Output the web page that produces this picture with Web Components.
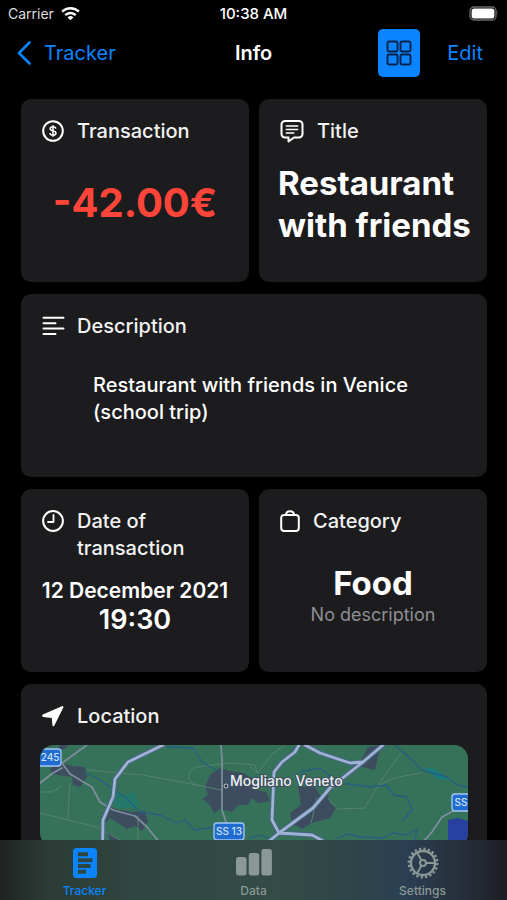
<!DOCTYPE html>
<html lang="en">
<head>
<meta charset="utf-8">
<meta name="viewport" content="width=device-width, initial-scale=1">
<title>Info</title>
<style>
  html, body {
    margin: 0;
    height: 100%;
    background: #000;
    color: #fff;
    font-family: Inter, "Noto Sans", sans-serif;
  }
</style>
</head>
<body>
<info-screen></info-screen>

<script>
  'use strict';
  {
    const ICONS = {
      wifi: '<svg viewBox="0 0 20 15"><g fill="none" stroke="currentColor" stroke-width="2.500"><path d="M1.200 5.600a12.500 12.500 0 0 1 17.600 0"/><path d="M4.500 9.200a7.800 7.800 0 0 1 11 0"/></g><path fill="currentColor" d="M10 14.500 6.900 11.600a4.600 4.600 0 0 1 6.200 0z"/></svg>',
      battery: '<svg viewBox="0 0 30 15"><rect x="1" y="1" width="26" height="13" rx="4" fill="none" stroke="#6b6b6b" stroke-width="1.300"/><rect x="2.600" y="2.600" width="22.800" height="9.800" rx="2.500" fill="#fff"/><path d="M28.300 5.300q1.500 2.200 0 4.400z" fill="#6b6b6b"/></svg>',
      back: '<svg viewBox="0 0 16 26"><path d="M13.500 2.500 3 13l10.500 10.500" fill="none" stroke="currentColor" stroke-width="2.700" stroke-linecap="round" stroke-linejoin="round"/></svg>',
      grid: '<svg viewBox="0 0 26 26"><g fill="none" stroke="#06224a" stroke-width="1.900"><rect x="1.500" y="1.500" width="10" height="10" rx="1.500"/><rect x="14.500" y="1.500" width="10" height="10" rx="1.500"/><rect x="1.500" y="14.500" width="10" height="10" rx="1.500"/><rect x="14.500" y="14.500" width="10" height="10" rx="1.500"/></g></svg>',
      money: '<svg viewBox="0 0 24 24"><circle cx="12" cy="12" r="9.800" fill="none" stroke="currentColor" stroke-width="2"/><path d="M14.800 9.700C14.600 8.300 13.500 7.800 12 7.800c-1.700 0-2.800.8-2.800 2 0 3 5.800 1.200 5.800 4.300 0 1.300-1.200 2.100-3 2.100-1.800 0-2.900-.8-3-2.200M12 6.200v11.600" fill="none" stroke="currentColor" stroke-width="1.500"/></svg>',
      bubble: '<svg viewBox="0 0 24 24"><path d="M5 2h14a3.500 3.500 0 0 1 3.500 3.500v9.500a3.500 3.500 0 0 1-3.500 3.500h-5L8.500 22.500V18.500H5a3.500 3.500 0 0 1-3.500-3.500V5.500a3.500 3.500 0 0 1 3.500-3.500z" fill="none" stroke="currentColor" stroke-width="2" stroke-linejoin="round"/><path d="M6.300 7h11.400M6.300 10.500h11.400M6.300 14h7.500" stroke="currentColor" stroke-width="1.500" stroke-linecap="round"/></svg>',
      lines: '<svg viewBox="0 0 24 24"><path d="M2.500 3.800h20M2.500 9.200h12M2.500 14.600h20M2.500 20h12" stroke="currentColor" stroke-width="2" stroke-linecap="round"/></svg>',
      clock: '<svg viewBox="0 0 24 24"><circle cx="12" cy="12" r="9.900" fill="none" stroke="currentColor" stroke-width="2"/><path d="M12.500 6v7H7" fill="none" stroke="currentColor" stroke-width="1.800" stroke-linecap="round" stroke-linejoin="round"/></svg>',
      bag: '<svg viewBox="0 0 20 24"><rect x="1.200" y="6" width="17.600" height="16" rx="3" fill="none" stroke="currentColor" stroke-width="2"/><path d="M6 6c0-5 8-5 8 0" fill="none" stroke="currentColor" stroke-width="2"/></svg>',
      arrow: '<svg viewBox="0 0 24 24"><path d="M1.800 10.400 20.900 2.200q2-.5 1.400 1.400L13.400 21.600q-1.500 1.700-2-.3l-.6-7.400-8.500-.9q-2.200-1.100-.5-2.600z" fill="currentColor"/></svg>',
      document: '<svg viewBox="0 0 32 32"><rect x="4" y="1" width="24" height="30" rx="3.500" fill="currentColor"/><path d="M9 7.300h10M9 13.300h14.500M9 19h12.500M9 24.800h8" stroke="#2e4640" stroke-width="4"/></svg>',
      bars: '<svg viewBox="0 0 38 32"><g fill="currentColor"><rect x="1" y="10" width="10.500" height="18.500" rx="2.500"/><rect x="13.700" y="6" width="10.500" height="22.500" rx="2.500"/><rect x="26.400" y="2" width="10.500" height="26.500" rx="2.500"/></g></svg>',
      gear: '<svg viewBox="0 0 32 32"><g fill="none" stroke="currentColor"><circle cx="16" cy="16" r="14.200" stroke-width="2.500" stroke-dasharray="2.230 2.230"/><circle cx="16" cy="16" r="12" stroke-width="2.300"/><circle cx="16" cy="16" r="3" stroke-width="2"/><path d="M19 16h9M14.500 13.400 10 5.600M14.500 18.600 10 26.400" stroke-width="2"/></g></svg>'
    };

    const define = (name, html) => {
      customElements.define(name, class extends HTMLElement {
        constructor() {
          super();
          this.attachShadow({mode: 'open'}).innerHTML = html;
        }
      });
    };

    /** `<ui-icon name="clock">` draws one of ICONS, as large as its host. */
    class UiIcon extends HTMLElement {
      constructor() {
        super();
        this.attachShadow({mode: 'open'});
      }

      connectedCallback() {
        this.shadowRoot.innerHTML = `
          <style>
            :host { display: block; flex: none; width: 24px; height: 24px; }
            svg { display: block; width: 100%; height: 100%; }
          </style>
          ${ICONS[this.getAttribute('name')]}
        `;
      }
    }
    customElements.define('ui-icon', UiIcon);

    define('status-bar', `
      <style>
        :host {
          display: grid;
          grid-template-columns: 1fr auto 1fr;
          align-items: center;
          height: 27px;
          padding: 0 8px;
          font-size: 14px;
        }
        .carrier { display: flex; align-items: center; gap: 7px; color: #ddd; }
        .wifi { width: 19px; height: 15px; color: #fff; }
        .time { font-size: 15px; font-weight: 500; }
        .battery { width: 30px; height: 15px; justify-self: end; }
      </style>
      <span class="carrier">Carrier <ui-icon class="wifi" name="wifi"></ui-icon></span>
      <span class="time">10:38 AM</span>
      <ui-icon class="battery" name="battery"></ui-icon>
    `);

    define('nav-bar', `
      <style>
        :host {
          display: grid;
          grid-template-columns: 1fr auto 1fr;
          align-items: center;
          height: 52px;
          padding: 0 16px;
          font-size: 20px;
        }
        a, button { font: inherit; color: #0a84ff; text-decoration: none; }
        button { border: 0; padding: 0; background: none; }
        .back { display: flex; align-items: center; gap: 12px; }
        .back ui-icon { width: 16px; height: 26px; }
        h1 { margin: 0; font-size: 20px; font-weight: 600; }
        .actions { display: flex; align-items: center; justify-content: flex-end; gap: 27px; padding-right: 8px; }
        .toggle {
          display: grid;
          place-items: center;
          width: 42px;
          height: 48px;
          border-radius: 5px;
          background: #0a84ff;
        }
        .toggle ui-icon { width: 26px; height: 26px; }
      </style>
      <a class="back" href="#tracker"><ui-icon name="back"></ui-icon>Tracker</a>
      <h1>Info</h1>
      <div class="actions">
        <button class="toggle" type="button" aria-label="Grid view"><ui-icon name="grid"></ui-icon></button>
        <button type="button">Edit</button>
      </div>
    `);

    /** Rounded tile with an icon, a heading and a slotted body. */
    class InfoCard extends HTMLElement {
      constructor() {
        super();
        this.attachShadow({mode: 'open'});
      }

      connectedCallback() {
        this.shadowRoot.innerHTML = `
          <style>
            :host {
              display: flex;
              flex-direction: column;
              box-sizing: border-box;
              min-height: 183px;
              padding: 19px 19px 0;
              border-radius: 10px;
              background: #1c1c1e;
            }
            header { display: flex; gap: 12px; padding-left: 1px; }
            .icon { margin-top: 1px; }
            .icon[name="bag"] { width: 22px; }
            .icon[name="bubble"] { width: 26px; }
            h2 { margin: 0; font-size: 20px; line-height: 27px; font-weight: 500; color: #f2f2f2; }
          </style>
          <header>
            <ui-icon class="icon" name="${this.getAttribute('icon')}"></ui-icon>
            <h2>${this.getAttribute('heading')}</h2>
          </header>
          <slot></slot>
        `;
      }
    }
    customElements.define('info-card', InfoCard);

    // Only the top of the map shows above the tab bar.
    define('area-map', `
      <style>
        :host { display: block; height: 180px; border-radius: 14px; overflow: hidden; background: #36725a; }
        svg { display: block; width: 100%; height: 100%; }
        .town { fill: #3d4c5e; }
        .faint { stroke: #57826f; stroke-width: 1; }
        .river { stroke: #245f82; stroke-width: 1.300; }
        .minor { stroke: #7c8d9b; stroke-width: 1.800; }
        .casing { stroke: #4a6680; stroke-width: 5; }
        .major { stroke: #9fb3d4; stroke-width: 2.800; }
        .sign rect { fill: #1f6bd0; stroke: #a5c8f5; stroke-width: 1.300; }
        .sign text { fill: #cfe2fb; font-size: 10px; font-weight: 500; text-anchor: middle; }
        .place { fill: #eef2f4; stroke: #3d4c5e; stroke-width: 2; paint-order: stroke; font-size: 14px; font-weight: 500; }
      </style>
      <svg viewBox="0 0 428 180" preserveAspectRatio="xMidYMin slice" role="img" aria-label="Map of Mogliano Veneto">
        <g class="town">
          <path d="M10 23 22 18 32 21 45 22 47 32 40 42 33 40 32 32 12 29z"/>
          <path d="M20 0h8l-3 4h-7z"/>
          <path d="M70 62 80 65 92 67 105 66 108 77 102 86 95 81 87 84 70 73 65 78 67 66z"/>
          <path d="M165 42 170 30 180 23 190 26 203 28 215 35 214 44 226 47 230 56 218 58 212 53 208 60 198 60 192 67 180 64 174 68 170 60 162 54 168 50z"/>
          <path d="M258 42 275 42 280 50 288 50 290 58 296 63 290 73 272 78 262 84 252 78 250 68 261 60z"/>
          <path d="M328 2 342 0 338 12 335 25 318 21z"/>
          <path d="M66 86 80 95H70z"/>
        </g>
        <path d="M70 45 84 50 95 47 99 63 77 63 73 56z" fill="#25796a"/>
        <path d="M383 22 394 24 410 35 398 34z" fill="#187b7c"/>
        <path d="M408 75 418 73 428 76V130H408z" fill="#2840a0"/>
        <g fill="none" stroke-linejoin="round" stroke-linecap="round">
          <path class="faint" d="M47 25 103 30 157 40 181 45M0 68 57 82 85 98M30 38 28 72M157 40C144 36 148 24 157 22L190 18 215 20 217 28M0 47H12L22 41M210 22 218 28 232 9 245 0M361 8 348 26 335 45 325 63 298 64 288 54M335 44C350 31 366 31 382 28M277 53 271 78M98 71V95"/>
          <path class="river" d="M45 28 57 33 70 42 85 52 100 67 120 70 137 78 145 75 155 85 175 82M127 2 153 3 163 18 180 27M260 27 280 23 290 31 300 38 330 42 347 40 353 50 367 52 372 65 363 75M355 0 370 13 382 25 407 32 417 40 428 42M297 93 308 89 320 92 343 93 353 88 367 90 377 84 374 100M210 93 220 90 230 94"/>
          <path class="minor" d="M47 0 22 18 30 29 52 42 60 57 73 65 95 71 107 82 120 98M0 38 13 28 22 23M181 0 182 15 182 65 187 80M383 97 392 87 402 72 417 64"/>
          <path class="casing" d="M123 0 88 17 75 34 73 52 63 75 62 130M259 0 255 7 242 17 234 27 232 75 239 88 272 90 285 97M228 97 239 88 273 63 290 43 323 17 343 0M265 0 280 8 310 18 323 17"/>
          <path class="major" d="M123 0 88 17 75 34 73 52 63 75 62 130M259 0 255 7 242 17 234 27 232 75 239 88 272 90 285 97M228 97 239 88 273 63 290 43 323 17 343 0M265 0 280 8 310 18 323 17"/>
        </g>
        <g class="sign">
          <rect x="-9" y="4" width="30" height="17" rx="3"/><text x="10" y="16">245</text>
          <rect x="174" y="78" width="30" height="17" rx="3"/><text x="189" y="90">SS 13</text>
          <rect x="412" y="49" width="30" height="17" rx="3"/><text x="421" y="61">SS</text>
        </g>
        <circle cx="186" cy="41" r="2" fill="#20262c" stroke="#cfd6da"/>
        <text class="place" x="190" y="41">Mogliano Veneto</text>
      </svg>
    `);

    define('tab-bar', `
      <style>
        :host {
          display: grid;
          grid-template-columns: repeat(3, 1fr);
          height: 60px;
          background: linear-gradient(90deg, #1f2221 0, #2b3b36 9%, #314842 30%, #344b46 55%, #2d4548 70%, #2b3f53 80%, #262d38 92%, #1d1e24 100%);
        }
        a {
          display: flex;
          flex-direction: column;
          align-items: center;
          gap: 4px;
          padding-top: 7px;
          color: #8a9996;
          font-size: 12px;
          line-height: 16px;
          font-weight: 500;
          text-decoration: none;
        }
        a[aria-current] { color: #0a84ff; }
        ui-icon { width: 38px; height: 32px; }
      </style>
      <a href="#tracker" aria-current="page"><ui-icon name="document"></ui-icon>Tracker</a>
      <a href="#data"><ui-icon name="bars"></ui-icon>Data</a>
      <a href="#settings"><ui-icon name="gear"></ui-icon>Settings</a>
    `);

    define('info-screen', `
      <style>
        :host { display: flex; flex-direction: column; height: 100vh; }
        main {
          flex: 1;
          min-height: 0;
          overflow-y: auto;
          scrollbar-width: none;
          display: grid;
          grid-template-columns: repeat(2, minmax(0, 1fr));
          align-content: start;
          gap: 12px 10px;
          padding: 20px 20px 20px 21px;
        }
        .wide { grid-column: 1 / -1; }
        p { margin: 0; }
        .amount { margin-top: 32px; text-align: center; font-size: 40px; line-height: 52px; font-weight: 700; color: #ff453a; }
        .title { margin-top: 17px; font-size: 33px; line-height: 42px; font-weight: 700; white-space: nowrap; }
        .description { margin: 32px 53px 0; font-size: 20px; line-height: 27px; font-weight: 500; }
        .date { margin: 16px -12px 0; text-align: center; font-size: 21px; line-height: 26px; font-weight: 600; }
        .time { text-align: center; font-size: 27px; line-height: 32px; font-weight: 600; }
        .category { margin-top: 27px; text-align: center; font-size: 33px; line-height: 42px; font-weight: 700; }
        .note { text-align: center; font-size: 18px; line-height: 22px; color: #8e8e93; }
        area-map { margin: 15px 0 20px; }
      </style>
      <status-bar></status-bar>
      <nav-bar></nav-bar>
      <main>
        <info-card icon="money" heading="Transaction"><p class="amount">-42.00€</p></info-card>
        <info-card icon="bubble" heading="Title"><p class="title">Restaurant<br>with friends</p></info-card>
        <info-card class="wide" icon="lines" heading="Description">
          <p class="description">Restaurant with friends in Venice (school trip)</p>
        </info-card>
        <info-card icon="clock" heading="Date of transaction">
          <p class="date">12 December 2021</p>
          <p class="time">19:30</p>
        </info-card>
        <info-card icon="bag" heading="Category">
          <p class="category">Food</p>
          <p class="note">No description</p>
        </info-card>
        <info-card class="wide" icon="arrow" heading="Location"><area-map></area-map></info-card>
      </main>
      <tab-bar></tab-bar>
    `);
  }
</script>
</body>
</html>
